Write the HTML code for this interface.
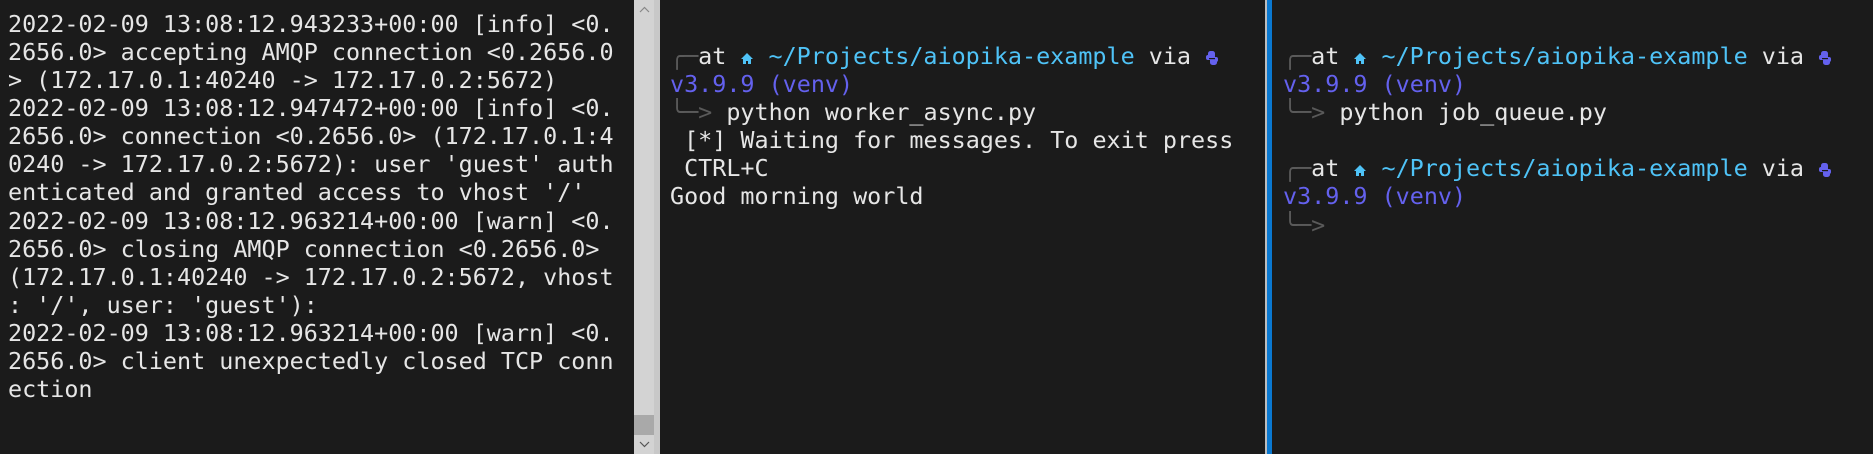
<!DOCTYPE html>
<html><head><meta charset="utf-8"><style>
html,body{margin:0;padding:0;width:1873px;height:454px;overflow:hidden;background:#1b1b1b}
.pane{position:absolute;top:0;height:454px;background:#1b1b1b}
pre{margin:0;font-family:"DejaVu Sans Mono","Liberation Mono",monospace;font-size:23.4px;line-height:28.08px;color:#e6e6e6;white-space:pre;position:absolute}
.c{color:#4fc3f7}.p{color:#6461ee}.g{color:#5a5a5a}
svg{display:inline-block;vertical-align:-2px}
</style></head><body>
<div class="pane" style="left:0;width:633px"><pre style="left:8px;top:10px">2022-02-09 13:08:12.943233+00:00 [info] &lt;0.
2656.0&gt; accepting AMQP connection &lt;0.2656.0
&gt; (172.17.0.1:40240 -&gt; 172.17.0.2:5672)
2022-02-09 13:08:12.947472+00:00 [info] &lt;0.
2656.0&gt; connection &lt;0.2656.0&gt; (172.17.0.1:4
0240 -&gt; 172.17.0.2:5672): user 'guest' auth
enticated and granted access to vhost '/'
2022-02-09 13:08:12.963214+00:00 [warn] &lt;0.
2656.0&gt; closing AMQP connection &lt;0.2656.0&gt;
(172.17.0.1:40240 -&gt; 172.17.0.2:5672, vhost
: '/', user: 'guest'):
2022-02-09 13:08:12.963214+00:00 [warn] &lt;0.
2656.0&gt; client unexpectedly closed TCP conn
ection</pre></div>
<div style="position:absolute;left:634px;top:0;width:20px;height:454px;background:#d3d3d3"></div>
<div style="position:absolute;left:654px;top:0;width:6px;height:454px;background:#c8c8c8"></div>
<div style="position:absolute;left:634px;top:415px;width:20px;height:20px;background:#a9a9a9"></div>
<svg style="position:absolute;left:639px;top:6px" width="11" height="7"><path d="M1 6 L5.5 1.5 L10 6" fill="none" stroke="#888" stroke-width="1.2"/></svg>
<svg style="position:absolute;left:639px;top:441px" width="11" height="7"><path d="M1 1 L5.5 5.5 L10 1" fill="none" stroke="#555" stroke-width="1.2"/></svg>

<div class="pane" style="left:660px;width:605px"><pre style="left:10px;top:14px">

<span class="g">╭─</span>at <svg width="14" height="16" viewBox="0 0 14 16"><path d="M7 3 L1 9 H3 V14 H6 V11 H8 V14 H11 V9 H13 Z" fill="#4fc3f7"/></svg> <span class="c">~/Projects/aiopika-example</span> via <svg width="14" height="16" viewBox="0 0 14 16"><rect x="3" y="1" width="7" height="8" rx="2.5" fill="#6461ee"/><rect x="1" y="5" width="7" height="5" rx="2" fill="#6461ee"/><rect x="5" y="7" width="7" height="8" rx="2.5" fill="#6461ee"/><rect x="7" y="7" width="6" height="5" rx="2" fill="#6461ee"/><rect x="4" y="8" width="6" height="1.2" fill="#1b1b1b"/></svg>
<span class="p">v3.9.9 (venv)</span>
<span class="g">╰─&gt;</span> python worker_async.py
 [*] Waiting for messages. To exit press
 CTRL+C
Good morning world</pre></div>

<div style="position:absolute;left:1265px;top:0;width:2px;height:454px;background:#bdbdbd"></div>
<div style="position:absolute;left:1267px;top:0;width:5px;height:454px;background:#0a78d0"></div>

<div class="pane" style="left:1272px;width:601px"><pre style="left:11px;top:14px">

<span class="g">╭─</span>at <svg width="14" height="16" viewBox="0 0 14 16"><path d="M7 3 L1 9 H3 V14 H6 V11 H8 V14 H11 V9 H13 Z" fill="#4fc3f7"/></svg> <span class="c">~/Projects/aiopika-example</span> via <svg width="14" height="16" viewBox="0 0 14 16"><rect x="3" y="1" width="7" height="8" rx="2.5" fill="#6461ee"/><rect x="1" y="5" width="7" height="5" rx="2" fill="#6461ee"/><rect x="5" y="7" width="7" height="8" rx="2.5" fill="#6461ee"/><rect x="7" y="7" width="6" height="5" rx="2" fill="#6461ee"/><rect x="4" y="8" width="6" height="1.2" fill="#1b1b1b"/></svg>
<span class="p">v3.9.9 (venv)</span>
<span class="g">╰─&gt;</span> python job_queue.py

<span class="g">╭─</span>at <svg width="14" height="16" viewBox="0 0 14 16"><path d="M7 3 L1 9 H3 V14 H6 V11 H8 V14 H11 V9 H13 Z" fill="#4fc3f7"/></svg> <span class="c">~/Projects/aiopika-example</span> via <svg width="14" height="16" viewBox="0 0 14 16"><rect x="3" y="1" width="7" height="8" rx="2.5" fill="#6461ee"/><rect x="1" y="5" width="7" height="5" rx="2" fill="#6461ee"/><rect x="5" y="7" width="7" height="8" rx="2.5" fill="#6461ee"/><rect x="7" y="7" width="6" height="5" rx="2" fill="#6461ee"/><rect x="4" y="8" width="6" height="1.2" fill="#1b1b1b"/></svg>
<span class="p">v3.9.9 (venv)</span>
<span class="g">╰─&gt;</span></pre></div>
</body></html>
